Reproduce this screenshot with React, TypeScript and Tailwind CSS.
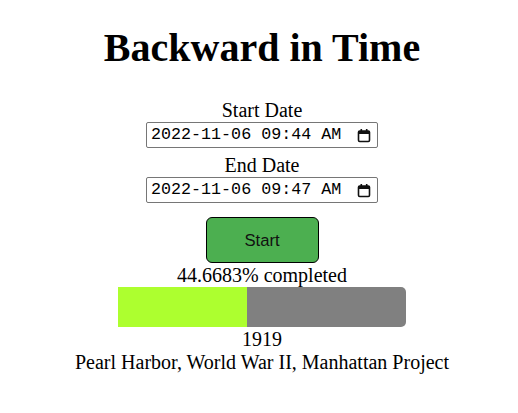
import { useState } from 'react'

// 日時フィールドの見た目（テキスト＋カレンダーアイコン）
const DateField = ({ value }: { value: string }) => (
  <div className="flex h-[26px] w-[232px] items-center justify-between rounded-[2px] border border-[#767676] bg-white pl-[4px] pr-[5px]">
    <span className="whitespace-pre font-['Liberation_Mono',monospace] text-[16.7px] leading-none text-black">
      {value}
    </span>
    <svg width="14" height="15" viewBox="0 0 14 15" className="mr-[1px]">
      <rect x="1.5" y="3" width="11" height="10.5" rx="1.2" fill="none" stroke="#111" strokeWidth="1.6" />
      <rect x="1.5" y="3" width="11" height="3" fill="#111" />
      <rect x="3.5" y="1" width="1.6" height="3" fill="#111" />
      <rect x="8.9" y="1" width="1.6" height="3" fill="#111" />
    </svg>
  </div>
)

export default function App() {
  const [percent] = useState(44.6683)

  return (
    <div className="flex min-h-screen flex-col items-center bg-white pl-[6px] font-['Liberation_Serif',serif] text-[20px] leading-[23px] text-black">
      <h1 className="mt-[25px] text-[40px] font-bold leading-[46px]">Backward in Time</h1>

      <div className="mt-[28px]">Start Date</div>
      <DateField value="2022-11-06 09:44 AM" />

      <div className="mt-[6px]">End Date</div>
      <DateField value="2022-11-06 09:47 AM" />

      <button className="mt-[14px] h-[46px] w-[113px] rounded-[6px] border border-black bg-[#4caf50] font-['Liberation_Sans',Arial,sans-serif] text-[16.7px] text-[#111]">
        Start
      </button>

      <div className="mt-[1px]">{percent}% completed</div>

      {/* 進捗バー */}
      <div className="flex h-[40px] w-[288px] overflow-hidden rounded-r-[5px] bg-[#808080]">
        <div className="h-full bg-[#adff2f]" style={{ width: `${percent}%` }} />
      </div>

      <div className="mt-[1px]">1919</div>
      <div>Pearl Harbor, World War II, Manhattan Project</div>
    </div>
  )
}
